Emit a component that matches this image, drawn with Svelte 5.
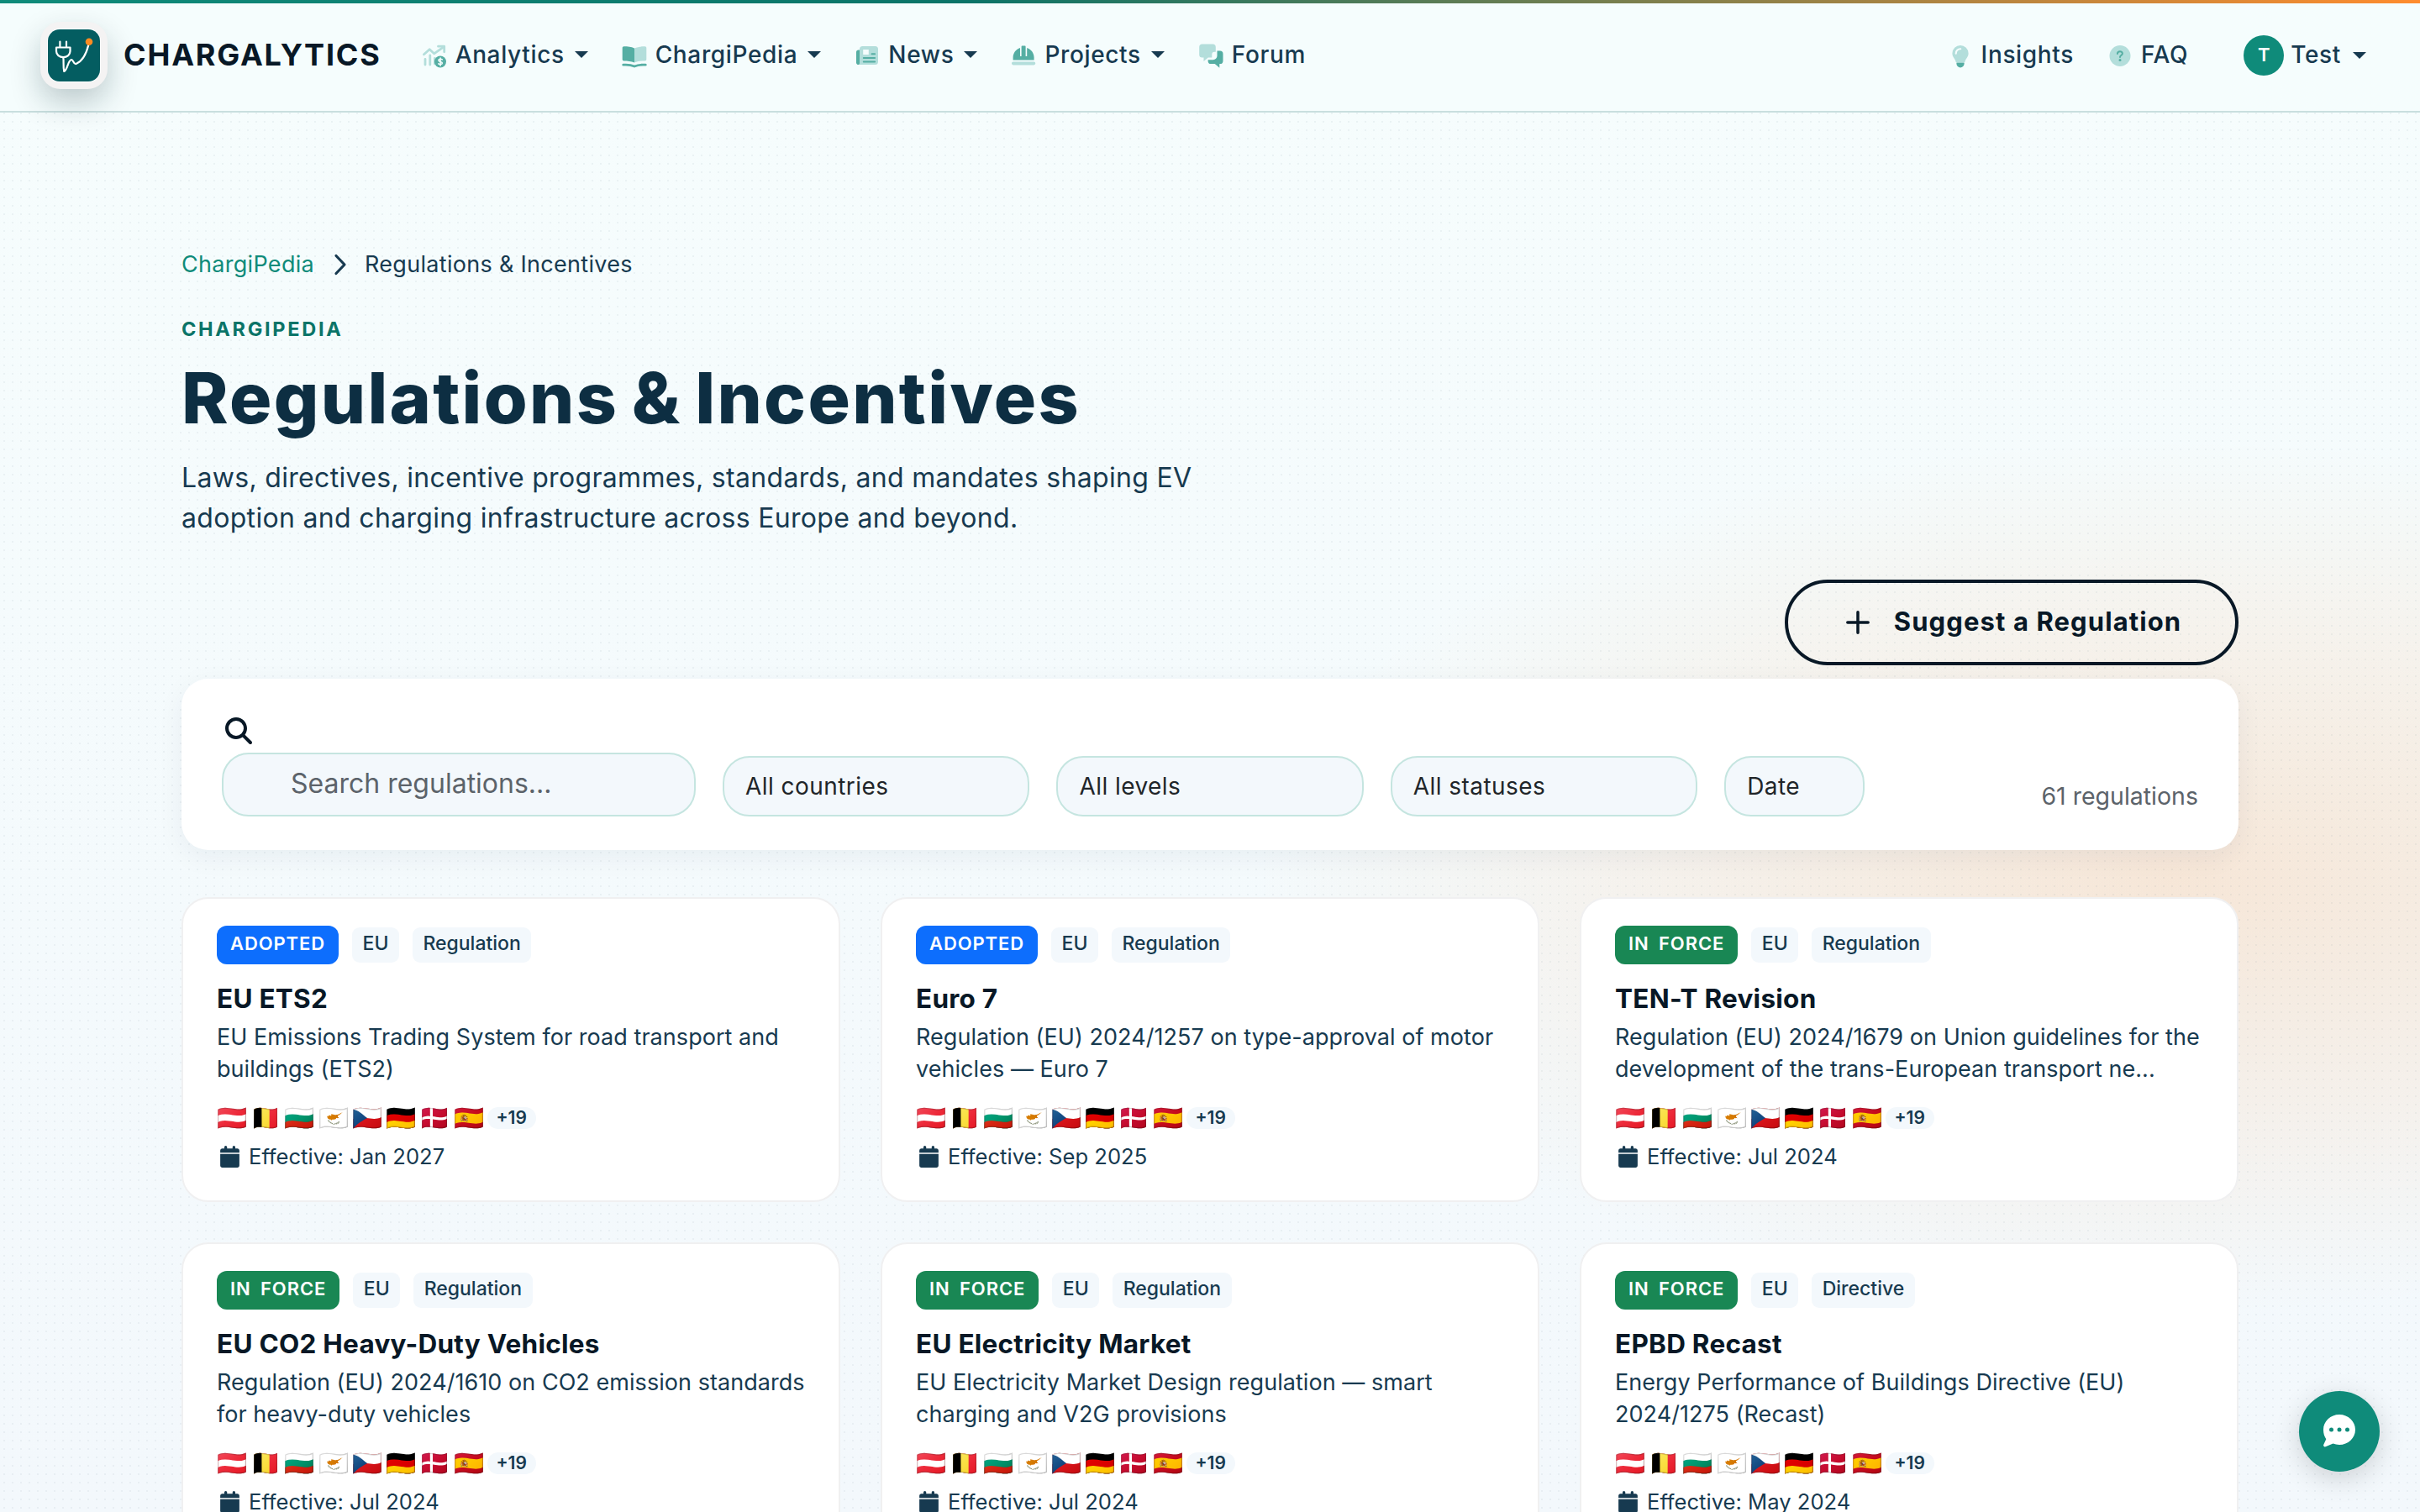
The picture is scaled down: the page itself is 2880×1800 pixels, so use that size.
<script>
    const mainLinks = [
        { label: 'Analytics', icon: 'chart', menu: true },
        { label: 'ChargiPedia', icon: 'book', menu: true },
        { label: 'News', icon: 'news', menu: true },
        { label: 'Projects', icon: 'helmet', menu: true },
        { label: 'Forum', icon: 'forum', menu: false }
    ];
    const sideLinks = [
        { label: 'Insights', icon: 'bulb' },
        { label: 'FAQ', icon: 'faq' }
    ];

    const flags = ['🇦🇹', '🇧🇪', '🇧🇬', '🇨🇾', '🇨🇿', '🇩🇪', '🇩🇰', '🇪🇸'];

    const regulations = [
        { status: 'Adopted', type: 'Regulation', title: 'EU ETS2', text: 'EU Emissions Trading System for road transport and buildings (ETS2)', date: 'Jan 2027' },
        { status: 'Adopted', type: 'Regulation', title: 'Euro 7', text: 'Regulation (EU) 2024/1257 on type-approval of motor vehicles — Euro 7', date: 'Sep 2025' },
        { status: 'In force', type: 'Regulation', title: 'TEN-T Revision', text: 'Regulation (EU) 2024/1679 on Union guidelines for the development of the trans-European transport ne...', date: 'Jul 2024' },
        { status: 'In force', type: 'Regulation', title: 'EU CO2 Heavy-Duty Vehicles', text: 'Regulation (EU) 2024/1610 on CO2 emission standards for heavy-duty vehicles', date: 'Jul 2024' },
        { status: 'In force', type: 'Regulation', title: 'EU Electricity Market', text: 'EU Electricity Market Design regulation — smart charging and V2G provisions', date: 'Jul 2024' },
        { status: 'In force', type: 'Directive', title: 'EPBD Recast', text: 'Energy Performance of Buildings Directive (EU) 2024/1275 (Recast)', date: 'May 2024' }
    ];

    const filters = ['All countries', 'All levels', 'All statuses'];

    let search = $state('');
</script>

{#snippet navIcon(name)}
    <svg class="nav-icon" viewBox="0 0 30 30">
        {#if name === 'chart'}
            <g class="line-light">
                <path d="M2.5 12.8 9.2 6.8l5.4 5L26 3.9" />
                <path d="M19.5 3.2h7.2v6.6" />
                <path d="M4 18.5V25M9.8 14v11M15.4 17.5V24" />
            </g>
            <circle class="dark" cx="22" cy="21.5" r="7" />
            <path class="cut" d="M24.3 18.9c-1.4-1-4.4-.9-4.4.9 0 2.1 4.5 1.1 4.5 3.3 0 1.9-3.2 1.9-4.7.8M22.1 16.9v9.3" />
        {:else if name === 'book'}
            <path class="dark" d="M.7 5c0-1 .8-1.7 1.8-1.7 4.5 0 8.7.4 12.5 2.2v17c-4-1.5-8-2-12.5-2-1 0-1.8-.7-1.8-1.7z" />
            <path class="light" d="M29.3 5c0-1-.8-1.7-1.8-1.7-4.5 0-8.7.4-12.5 2.2v17c4-1.5 8-2 12.5-2 1 0 1.8-.7 1.8-1.7z" />
            <path class="line-dark" d="M1.7 25.2c5-.4 9.3 0 13.3 1.9 4-1.9 8.3-2.3 13.3-1.9" />
        {:else if name === 'news'}
            <path class="dark" d="M2 10c0-1.6 1-2.6 2.6-2.6H7v17.7H4.7C3 25.1 2 24 2 22.5z" />
            <path class="light" fill-rule="evenodd" d="M9.5 3h15A3.5 3.5 0 0 1 28 6.5v15.1a3.5 3.5 0 0 1-3.5 3.5H4.7C6 24.6 6 23.5 6 22.5v-16A3.5 3.5 0 0 1 9.5 3zM10.2 7v6h6.6V7z" />
            <path class="line-dark thin" d="M20.5 12.2h3.6M10.8 17h13.3M10.8 21.4h13.3" />
        {:else if name === 'helmet'}
            <path class="dark" d="M2.6 19.5v-3c0-5.4 3.5-9.9 8.4-11.5v10h1.6V3.4c0-.5.3-.8.8-.8h3.4c.5 0 .8.3.8.8V15h1.6V5c4.9 1.6 8.4 6.1 8.4 11.5v3z" />
            <rect class="light" x="1" y="21.4" width="28.2" height="4" rx="1.8" />
        {:else if name === 'forum'}
            <path class="light" d="M4.8.5h12.4a3.6 3.6 0 0 1 3.6 3.6v5.7h-1.5a3 3 0 0 0-3 3v3.8h-4.5L6.5 21v-4.4H4.8A3.6 3.6 0 0 1 1.2 13V4.1A3.6 3.6 0 0 1 4.8.5z" />
            <path class="dark" d="M22.5 8.5h3.4a3.6 3.6 0 0 1 3.6 3.6v8.3a3.6 3.6 0 0 1-3.6 3.6h-.6v4.8L19.8 24h-4.6a3.6 3.6 0 0 1-3.6-3.6v-1.2h6.1a4.8 4.8 0 0 0 4.8-4.8z" />
        {:else if name === 'bulb'}
            <path class="light" fill-rule="evenodd" d="M15 2a9.6 9.6 0 0 1 9.6 9.6c0 4.7-3.6 6.4-4.3 10.4H9.7c-.7-4-4.3-5.7-4.3-10.4A9.6 9.6 0 0 1 15 2zm0 3.2a6.2 6.2 0 0 0-6.3 6.3c0 1.8 2.1 1.8 2.1 0 0-2.4 1.8-4.2 4.2-4.2 1.8 0 1.8-2.1 0-2.1z" />
            <path class="dark" d="M10.4 22.4h9.2v1.4a4.6 4.6 0 0 1-9.2 0z" />
        {:else}
            <circle class="light" cx="15" cy="14.5" r="12.5" />
            <path class="line-dark thin" d="M11.9 12c.2-3.7 6-3.5 6-.3 0 2-2.9 2.3-2.9 4.4" />
            <circle class="dark" cx="15" cy="19.6" r="1.5" />
        {/if}
    </svg>
{/snippet}

<div class="page">
    <header class="navbar">
        <a class="brand" href="/">
            <span class="logo">
                <svg viewBox="0 0 64 64">
                    <rect width="64" height="64" rx="15" fill="#fff" />
                    <rect x="1" y="1" width="62" height="62" rx="14" fill="#045d61" />
                    <g fill="none" stroke="#fff" stroke-width="2.2" stroke-linecap="round" stroke-linejoin="round">
                        <path d="M15.4 15.5v6M23 15.5v6" />
                        <path d="M11 22.5h16.5v4.5c0 4-3.5 7.2-8.2 7.2S11 31 11 27z" />
                        <path d="M19.3 34.500c.8 4-.4 10 1 16.500 4.700-3 4.200-13 8.700-14 2.600 0 2.400 6.500 6 4.800 6.500-3 11.500-11 14.300-22.300" />
                    </g>
                    <circle cx="50" cy="15.7" r="4.3" fill="#fb8c23" />
                </svg>
            </span>
            <span class="brand-name">CHARGALYTICS</span>
        </a>
        <nav class="links">
            {#each mainLinks as link}
                <a class="link" href="/">
                    {@render navIcon(link.icon)}
                    <span>{link.label}</span>
                    {#if link.menu}<i class="caret"></i>{/if}
                </a>
            {/each}
        </nav>
        <nav class="links side">
            {#each sideLinks as link}
                <a class="link" href="/">
                    {@render navIcon(link.icon)}
                    <span>{link.label}</span>
                </a>
            {/each}
        </nav>
        <a class="account" href="/">
            <span class="avatar">T</span>
            <span class="account-name">Test</span>
            <i class="caret"></i>
        </a>
    </header>

    <main class="content">
        <div class="breadcrumb">
            <a href="/">ChargiPedia</a>
            <svg viewBox="0 0 16 26"><path d="M3 2.5 13 13 3 23.5" /></svg>
            <span>Regulations &amp; Incentives</span>
        </div>
        <div class="eyebrow">CHARGIPEDIA</div>
        <h1>Regulations &amp; Incentives</h1>
        <p class="lead">Laws, directives, incentive programmes, standards, and mandates shaping EV adoption and charging infrastructure across Europe and beyond.</p>

        <button class="suggest">
            <svg viewBox="0 0 28 28"><path d="M14 1.8v24.4M1.8 14h24.4" /></svg>
            Suggest a Regulation
        </button>

        <section class="filters">
            <div class="search">
                <svg viewBox="0 0 512 512">
                    <path d="M416 208c0 45.9-14.9 88.3-40 122.7L502.6 457.4c12.5 12.5 12.5 32.8 0 45.3s-32.8 12.5-45.3 0L330.7 376c-34.4 25.2-76.8 40-122.7 40C93.1 416 0 322.9 0 208S93.1 0 208 0S416 93.1 416 208zM208 352a144 144 0 1 0 0-288 144 144 0 1 0 0 288z" />
                </svg>
                <input type="text" placeholder="Search regulations..." bind:value={search} />
            </div>
            {#each filters as filter}
                <button class="select">{filter}</button>
            {/each}
            <button class="select date">Date</button>
            <span class="count">61 regulations</span>
        </section>

        <section class="cards">
            {#each regulations as reg}
                <article class="card">
                    <div class="tags">
                        <span class="status" class:in-force={reg.status === 'In force'}>{reg.status}</span>
                        <span class="tag">EU</span>
                        <span class="tag">{reg.type}</span>
                    </div>
                    <h2>{reg.title}</h2>
                    <p>{reg.text}</p>
                    <div class="flags">
                        {#each flags as flag}<span class="flag">{flag}</span>{/each}
                        <span class="more">+19</span>
                    </div>
                    <div class="effective">
                        <svg viewBox="0 0 448 512">
                            <path d="M128 0c17.7 0 32 14.3 32 32V64H288V32c0-17.7 14.3-32 32-32s32 14.3 32 32V64h48c26.5 0 48 21.5 48 48v48H0V112C0 85.5 21.5 64 48 64H96V32c0-17.7 14.3-32 32-32zM0 192H448V464c0 26.5-21.5 48-48 48H48c-26.5 0-48-21.5-48-48V192z" />
                        </svg>
                        Effective: {reg.date}
                    </div>
                </article>
            {/each}
        </section>
    </main>

    <button class="chat" aria-label="Chat">
        <svg viewBox="0 0 38 39">
            <path fill="#fff" d="M19 0c10.5 0 19 8 19 18s-8.5 18-19 18c-2.7 0-5.2-.5-7.5-1.4L2.6 38.3C1 38.9-.5 37.3.3 35.7l3-6.4C1.2 26.3 0 22.3 0 18 0 8 8.5 0 19 0z" />
            <g fill="#0f8b7a">
                <circle cx="9.5" cy="18" r="2.5" />
                <circle cx="19" cy="18" r="2.5" />
                <circle cx="28.5" cy="18" r="2.5" />
            </g>
        </svg>
    </button>
</div>

<style>
    :global(body) {
        margin: 0;
        overflow: hidden;
    }
    .page {
        --teal: #0f8b7a;
        --ink: #081826;
        --text: #173a50;
        height: 1800px;
        overflow: hidden;
        box-sizing: border-box;
        font-family: Inter, 'Noto Sans', sans-serif;
        color: var(--text);
        background:
            radial-gradient(circle at center, rgba(15, 60, 80, 0.05) 1px, transparent 1.5px) 0 0 / 10px 10px,
            radial-gradient(1100px 520px at 90% 58%, rgba(255, 140, 46, 0.18), transparent),
            linear-gradient(180deg, #f6fdfd 0%, #f3f8fc 100%);
    }
    a {
        color: inherit;
        text-decoration: none;
    }
    button {
        font-family: inherit;
        cursor: pointer;
    }

    /* Navbar */
    .navbar {
        display: flex;
        align-items: center;
        height: 134px;
        box-sizing: border-box;
        padding: 0 64px 0 48px;
        border-bottom: 2px solid #c9dfdf;
        background:
            linear-gradient(90deg, #0f8b7a 0%, #0b7468 40%, #ff8c2e 100%) top / 100% 4px no-repeat,
            #f5fdfd;
    }
    .brand {
        display: flex;
        align-items: center;
        gap: 19px;
    }
    .logo {
        width: 64px;
        height: 64px;
        padding: 8px;
        border-radius: 24px;
        background: #f4f3f3;
        box-shadow: 0 16px 36px rgba(8, 40, 50, 0.24);
    }
    .logo svg {
        display: block;
    }
    .brand-name {
        font-size: 36px;
        font-weight: 700;
        line-height: 44px;
        letter-spacing: 1.8px;
        color: var(--ink);
        padding-bottom: 2px;
    }
    .links {
        display: flex;
        gap: 40px;
        margin-left: 48px;
        padding-bottom: 3px;
    }
    .links.side {
        margin-left: auto;
    }
    .link, .account {
        display: flex;
        align-items: center;
        font-size: 28px;
        font-weight: 500;
        line-height: 40px;
        letter-spacing: 0.65px;
    }
    .nav-icon {
        width: 30px;
        height: 30px;
        margin: 5px 10px 0 0;
    }
    .nav-icon .light { fill: #b3dedb; }
    .nav-icon .dark { fill: #55aea3; }
    .nav-icon .line-light, .nav-icon .line-dark, .nav-icon .cut {
        fill: none;
        stroke: #b3dedb;
        stroke-width: 2.8;
        stroke-linecap: round;
        stroke-linejoin: round;
    }
    .nav-icon .line-dark { stroke: #55aea3; }
    .nav-icon .thin { stroke-width: 2; }
    .nav-icon .cut {
        stroke: #f5fdfd;
        stroke-width: 1.5;
    }
    .caret {
        margin-left: 12px;
        border: 8px solid transparent;
        border-top-color: var(--text);
        border-bottom: 0;
    }
    .account {
        margin-left: 66px;
    }
    .avatar {
        width: 48px;
        height: 48px;
        border-radius: 50%;
        background: var(--teal);
        color: #fff;
        font-size: 22px;
        font-weight: 600;
        line-height: 46px;
        letter-spacing: 0;
        text-align: center;
    }
    .account-name {
        margin: 0 2px 3px 8px;
    }

    /* Heading */
    .content {
        padding: 161px 216px 0;
    }
    .breadcrumb {
        display: flex;
        align-items: center;
        font-size: 27px;
        line-height: 40px;
        letter-spacing: 0.3px;
    }
    .breadcrumb a { color: var(--teal); }
    .breadcrumb svg {
        width: 16px;
        height: 26px;
        margin: 0 21px 0 23px;
        fill: none;
        stroke: var(--text);
        stroke-width: 3.2;
        stroke-linecap: round;
        stroke-linejoin: round;
    }
    .eyebrow {
        margin-top: 38.5px;
        font-size: 23.5px;
        font-weight: 700;
        line-height: 36px;
        letter-spacing: 2.7px;
        color: #0b7468;
    }
    h1 {
        margin: 16px 0 23px;
        font-size: 84px;
        font-weight: 800;
        line-height: 96px;
        letter-spacing: 2.3px;
        word-spacing: -5px;
        color: #0d2e42;
    }
    .lead {
        margin: 0;
        max-width: 1240px;
        font-size: 32px;
        line-height: 48px;
        letter-spacing: 0.32px;
    }
    .suggest {
        display: flex;
        align-items: center;
        justify-content: center;
        gap: 29px;
        width: 540px;
        height: 102px;
        margin: 49.5px 0 16px auto;
        border: 4px solid var(--ink);
        border-radius: 51px;
        background: none;
        color: var(--ink);
        font-size: 31px;
        font-weight: 700;
        letter-spacing: 1.1px;
        padding: 0 0 4px 5px;
    }
    .suggest svg {
        width: 28px;
        height: 28px;
        margin-top: 4px;
        stroke: var(--ink);
        stroke-width: 3.5;
        stroke-linecap: round;
    }

    /* Filters */
    .filters {
        display: flex;
        align-items: flex-end;
        gap: 32px;
        height: 204px;
        box-sizing: border-box;
        padding: 0 48px 40px;
        border-radius: 32px;
        background: #fff;
        box-shadow: 0 8px 32px rgba(8, 40, 60, 0.06);
    }
    .search {
        display: flex;
        flex-direction: column;
        gap: 10px;
        width: 564px;
    }
    .search svg {
        width: 32px;
        height: 32px;
        margin-left: 4px;
        fill: var(--ink);
    }
    .search input, .select {
        box-sizing: border-box;
        border: 2px solid #c5e5e0;
        border-radius: 32px;
        background: #f3f8fc;
        outline: none;
    }
    .search input {
        width: 100%;
        height: 76px;
        padding: 0 24px 4px 80px;
        font-family: inherit;
        font-size: 32px;
    }
    .search input::placeholder {
        color: #5c636a;
        opacity: 1;
    }
    .select {
        width: 365.4px;
        height: 72px;
        padding: 0 25px;
        color: #212529;
        font-size: 28px;
        letter-spacing: 0.45px;
        text-align: left;
    }
    .select.date {
        width: 167px;
    }
    .count {
        margin-left: auto;
        padding-bottom: 3px;
        font-size: 28.5px;
        line-height: 42px;
        color: #5c636a;
    }

    /* Cards */
    .cards {
        display: grid;
        grid-template-columns: repeat(3, 1fr);
        gap: 48px;
        margin-top: 56px;
    }
    .card {
        height: 363px;
        box-sizing: border-box;
        padding: 32px 40px 0;
        border: 2px solid #f0f0f1;
        border-radius: 32px;
        background: #fff;
    }
    .tags {
        display: flex;
        align-items: center;
        gap: 16px;
    }
    .status {
        padding: 0 16px 3px;
        border-radius: 12px;
        background: #0d6efd;
        color: #fff;
        font-size: 22px;
        font-weight: 600;
        line-height: 43px;
        letter-spacing: 0.9px;
        word-spacing: 5px;
        text-transform: uppercase;
    }
    .status.in-force {
        background: #198754;
    }
    .tag {
        padding: 0 12.5px 3px;
        border-radius: 9px;
        background: #f3f8fc;
        font-size: 23px;
        font-weight: 500;
        line-height: 39px;
    }
    h2 {
        margin: 19px 0 4.5px;
        color: var(--ink);
        font-size: 31.5px;
        font-weight: 700;
        line-height: 44px;
        letter-spacing: 0.25px;
    }
    .card p {
        margin: 0 -16px 0 0;
        font-size: 27px;
        line-height: 38px;
        letter-spacing: 0.05px;
    }
    .flags {
        display: flex;
        align-items: center;
        gap: 4.2px;
        height: 34px;
        margin: 22px 0 10px;
    }
    .flag {
        font-family: 'Noto Color Emoji', sans-serif;
        font-size: 29px;
        line-height: 34px;
    }
    .more {
        padding: 0 11px 0 10px;
        border-radius: 13px;
        background: #f3f8fc;
        font-size: 21px;
        font-weight: 600;
        line-height: 26px;
    }
    .effective {
        display: flex;
        align-items: center;
        gap: 11px;
        padding-left: 4px;
        font-size: 25.6px;
        line-height: 38px;
    }
    .effective svg {
        width: 23px;
        height: 26px;
        fill: var(--text);
    }

    .chat {
        position: fixed;
        right: 48px;
        bottom: 48px;
        width: 96px;
        height: 96px;
        padding: 0;
        border: 0;
        border-radius: 50%;
        background: var(--teal);
        box-shadow: 0 8px 32px rgba(0, 0, 0, 0.16);
    }
    .chat svg {
        display: block;
        width: 38px;
        height: 39px;
        margin: -1px auto 0;
    }
</style>
